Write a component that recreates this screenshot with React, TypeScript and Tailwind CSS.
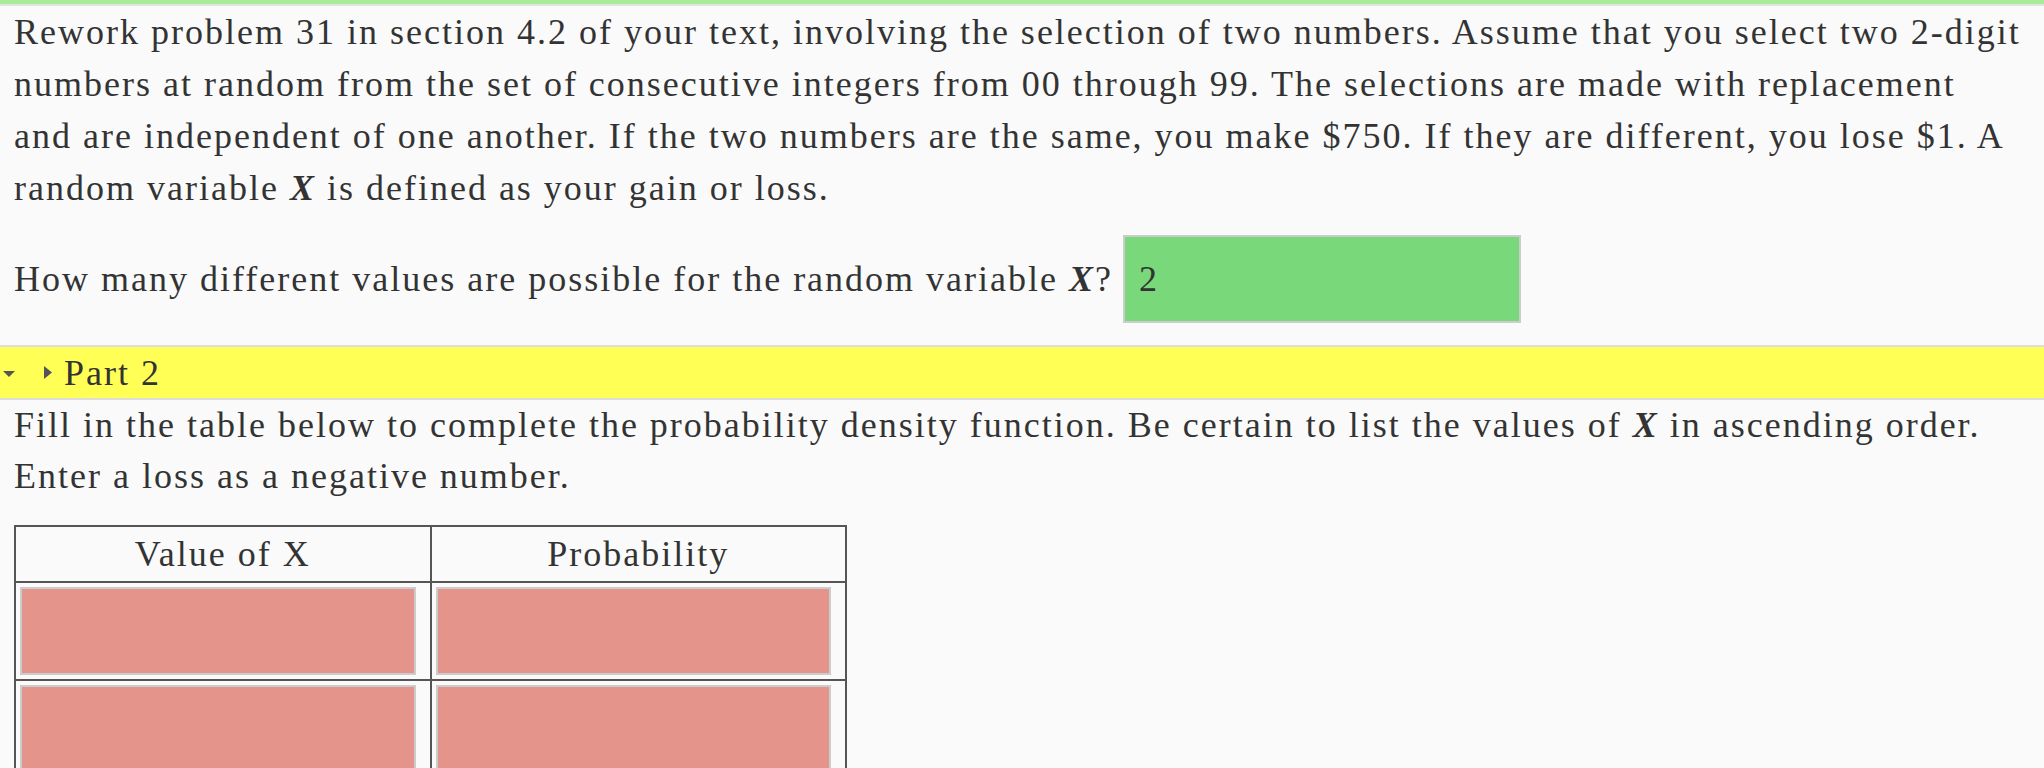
import React from "react";

const serif = { fontFamily: '"Liberation Serif", "DejaVu Serif", serif' };

function VarX() {
  return <span className="font-bold italic">X</span>;
}

export default function App() {
  return (
    <div className="min-h-[768px] bg-[#fafafa] text-[#333] text-[36px] tracking-[2px]" style={serif}>
      <div className="h-[4px] bg-[#a8ec9a]" />
      <div className="h-[2px] bg-[#e2e2e2]" />

      <div className="px-[14px]">
        <p className="whitespace-nowrap leading-[52px]">
          Rework problem 31 in section 4.2 of your text, involving the selection of two numbers. Assume that you select two 2-digit
          <br />
          numbers at random from the set of consecutive integers from 00 through 99. The selections are made with replacement
          <br />
          and are independent of one another. If the two numbers are the same, you make $750. If they are different, you lose $1. A
          <br />
          random variable <VarX /> is defined as your gain or loss.
        </p>

        <div className="mt-[21px] flex items-center gap-[10px]">
          <span className="whitespace-nowrap">
            How many different values are possible for the random variable <VarX />?
          </span>
          <div className="flex h-[88px] w-[398px] items-center border-2 border-[#cccccc] bg-[#79d879] px-[14px]">
            2
          </div>
        </div>
      </div>

      <div className="mt-[22px] border-y-2 border-[#dddddd] bg-[#ffff55]">
        <div className="flex h-[51px] items-center">
          <svg width="14" height="8" viewBox="0 0 14 8" className="ml-[2px] mt-[2px]">
            <path d="M1 1 L13 1 L7 7 Z" fill="#555" />
          </svg>
          <svg width="10" height="15" viewBox="0 0 10 15" className="ml-[27px]">
            <path d="M1 1 L9 7.5 L1 14 Z" fill="#555" />
          </svg>
          <span className="ml-[11px]">Part 2</span>
        </div>
      </div>

      <div className="px-[14px]">
        <p className="whitespace-nowrap leading-[51px]">
          Fill in the table below to complete the probability density function. Be certain to list the values of <VarX /> in ascending order.
          <br />
          Enter a loss as a negative number.
        </p>

        <table className="mt-[23px] w-[833px] border-collapse border-2 border-[#555]">
          <thead>
            <tr>
              <th className="h-[56px] w-1/2 border-2 border-[#555] font-normal">Value of X</th>
              <th className="h-[56px] w-1/2 border-2 border-[#555] font-normal">Probability</th>
            </tr>
          </thead>
          <tbody>
            {[0, 1, 2].map((r) => (
              <tr key={r}>
                {[0, 1].map((c) => (
                  <td key={c} className="border-2 border-[#555] pt-[4px] pb-[4px] pl-[4px] pr-[14px]">
                    <div className="h-[88px] border-2 border-[#cccccc] bg-[#e5948c]" />
                  </td>
                ))}
              </tr>
            ))}
          </tbody>
        </table>
      </div>
    </div>
  );
}
